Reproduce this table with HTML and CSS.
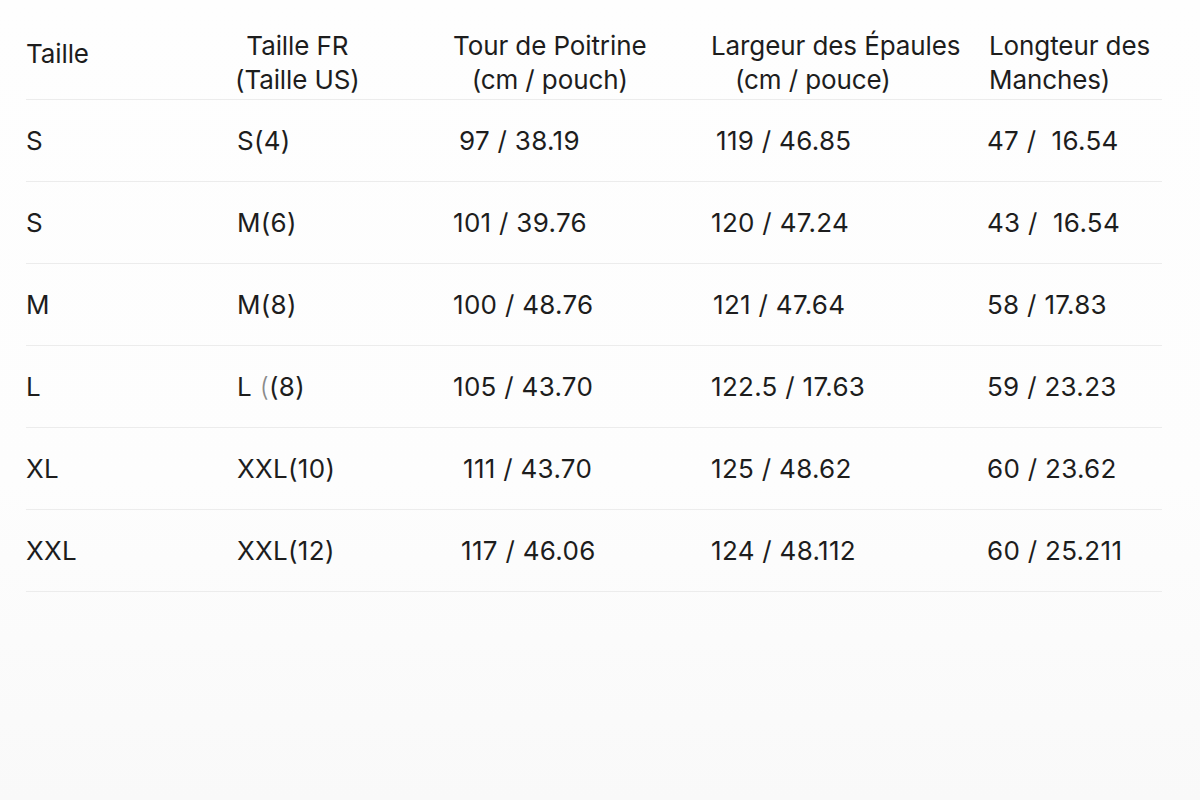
FILE: index.html
```html
<!DOCTYPE html>
<html lang="fr">
<head>
<meta charset="utf-8">
<title>Guide des tailles</title>
<link rel="stylesheet" href="styles.css">
</head>
<body>
<div class="page">
  <div class="table">
    <div class="row head">
      <div class="cell c1"><span class="solo">Taille</span></div>
      <div class="cell c2"><span class="center">Taille FR<br>(Taille US)</span></div>
      <div class="cell c3"><span class="center">Tour de Poitrine<br>(cm / pouch)</span></div>
      <div class="cell c4"><span class="l1">Largeur des Épaules</span><span class="l2">(cm / pouce)</span></div>
      <div class="cell c5"><span class="l5">Longteur des<br>Manches)</span></div>
    </div>
    <div class="row">
      <div class="cell c1">S</div>
      <div class="cell c2">S(4)</div>
      <div class="cell c3 n6">97 / 38.19</div>
      <div class="cell c4 n5">119 / 46.85</div>
      <div class="cell c5">47 /&nbsp; 16.54</div>
    </div>
    <div class="row">
      <div class="cell c1">S</div>
      <div class="cell c2">M(6)</div>
      <div class="cell c3">101 / 39.76</div>
      <div class="cell c4">120 / 47.24</div>
      <div class="cell c5">43 /&nbsp; 16.54</div>
    </div>
    <div class="row">
      <div class="cell c1">M</div>
      <div class="cell c2">M(8)</div>
      <div class="cell c3">100 / 48.76</div>
      <div class="cell c4 n2">121 / 47.64</div>
      <div class="cell c5">58 / 17.83</div>
    </div>
    <div class="row">
      <div class="cell c1">L</div>
      <div class="cell c2">L <span class="faint">(</span>(8)</div>
      <div class="cell c3">105 / 43.70</div>
      <div class="cell c4">122.5 / 17.63</div>
      <div class="cell c5">59 / 23.23</div>
    </div>
    <div class="row">
      <div class="cell c1">XL</div>
      <div class="cell c2">XXL(10)</div>
      <div class="cell c3 n10">111 / 43.70</div>
      <div class="cell c4">125 / 48.62</div>
      <div class="cell c5">60 / 23.62</div>
    </div>
    <div class="row">
      <div class="cell c1">XXL</div>
      <div class="cell c2">XXL(12)</div>
      <div class="cell c3 n8">117 / 46.06</div>
      <div class="cell c4">124 / 48.112</div>
      <div class="cell c5">60 / 25.211</div>
    </div>
  </div>
</div>
</body>
</html>
```
FILE: styles.css
```css
html, body {
  margin: 0;
  padding: 0;
}
body {
  width: 1200px;
  height: 800px;
  overflow: hidden;
  background: linear-gradient(to bottom, #fefefe 0%, #fdfdfd 60%, #f9f9f9 100%);
  font-family: Inter, "Noto Sans", "Liberation Sans", sans-serif;
  color: #1d1d1d;
  font-size: 26px;
}
.page {
  padding: 0 38px 0 26px;
}
.table {
  display: flex;
  flex-direction: column;
}
.row {
  display: grid;
  grid-template-columns: 211px 216px 258px 276px 1fr;
  height: 81px;
  align-items: center;
  border-bottom: 1.5px solid #ececec;
  line-height: 34px;
  letter-spacing: 0.3px;
}
.row.head {
  height: 100px;
  align-items: start;
  box-sizing: border-box;
  letter-spacing: -0.1px;
}
.head .cell {
  padding-top: 29px;
}
.head .solo {
  display: block;
  padding-top: 8px;
}
.head .center {
  display: inline-block;
  text-align: center;
}
.head .c2 .center {
  margin-left: -2px;
}
.head .l1, .head .l2 {
  display: block;
  white-space: nowrap;
}
.head .l2 {
  padding-left: 24px;
}
.head .l5 {
  display: block;
  padding-left: 2px;
  white-space: nowrap;
}
.cell {
  white-space: nowrap;
}
.n2 { padding-left: 2px; }
.n5 { padding-left: 5px; }
.n6 { padding-left: 6px; }
.n8 { padding-left: 8px; }
.n10 { padding-left: 10px; }
.faint {
  color: #8a8a8a;
  font-weight: 300;
}
```
